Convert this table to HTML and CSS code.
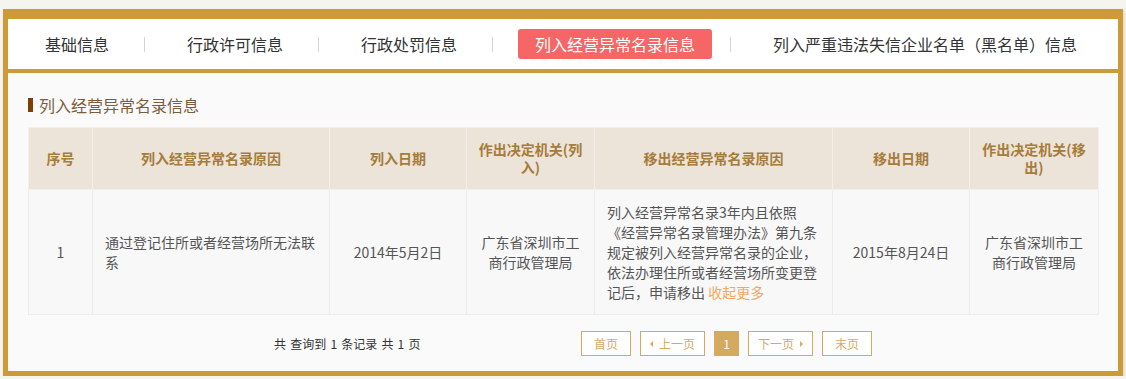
FILE: index.html
```html
<!DOCTYPE html>
<html lang="zh-CN">
<head>
<meta charset="utf-8">
<title>列入经营异常名录信息</title>
<link rel="stylesheet" href="styles.css">
</head>
<body>
<div class="panel">
  <nav class="tabs">
    <a class="tab">基础信息</a>
    <span class="sep"></span>
    <a class="tab">行政许可信息</a>
    <span class="sep"></span>
    <a class="tab">行政处罚信息</a>
    <span class="sep"></span>
    <a class="tab active">列入经营异常名录信息</a>
    <span class="sep"></span>
    <a class="tab">列入严重违法失信企业名单（黑名单）信息</a>
  </nav>
  <section class="content">
    <h2 class="title">列入经营异常名录信息</h2>
    <table class="grid">
      <colgroup>
        <col class="c1"><col class="c2"><col class="c3"><col class="c4"><col class="c5"><col class="c6"><col class="c7">
      </colgroup>
      <thead>
        <tr>
          <th>序号</th>
          <th>列入经营异常名录原因</th>
          <th>列入日期</th>
          <th>作出决定机关(列入)</th>
          <th>移出经营异常名录原因</th>
          <th>移出日期</th>
          <th>作出决定机关(移出)</th>
        </tr>
      </thead>
      <tbody>
        <tr>
          <td>1</td>
          <td class="left">通过登记住所或者经营场所无法联系</td>
          <td>2014年5月2日</td>
          <td>广东省深圳市工商行政管理局</td>
          <td class="left"><span class="reason">列入经营异常名录3年内且依照《经营异常名录管理办法》第九条规定被列入经营异常名录的企业，依法办理住所或者经营场所变更登</span><span class="reason-tail">记后，申请移出 <a class="more">收起更多</a></span></td>
          <td>2015年8月24日</td>
          <td>广东省深圳市工商行政管理局</td>
        </tr>
      </tbody>
    </table>
    <div class="pager">
      <div class="pager-info">共 查询到 1 条记录 共 1 页</div>
      <div class="pager-btns">
        <a class="pbtn w50">首页</a>
        <a class="pbtn w65"><span class="tri-left"></span>上一页</a>
        <a class="pbtn current">1</a>
        <a class="pbtn w65">下一页<span class="tri-right"></span></a>
        <a class="pbtn w50">末页</a>
      </div>
    </div>
  </section>
</div>
</body>
</html>
```

FILE: styles.css
```css
* { box-sizing: border-box; }
html, body { margin: 0; padding: 0; }
body {
  background: #f6f4ee;
  padding: 9px 3px 0 3px;
  font-family: "Noto Sans CJK SC", "Noto Sans", sans-serif;
  color: #333;
}
.panel {
  width: 1120px;
  background: #cc9b37;
  padding: 10px 5px 5px 5px;
  box-shadow: 1px 2px 3px rgba(0,0,0,0.15);
}
.tabs {
  height: 50px;
  background: #fff;
  margin-bottom: 4px;
  display: flex;
  align-items: center;
  padding-left: 20px;
}
.tab {
  display: block;
  height: 30px;
  line-height: 30px;
  padding: 0 17px;
  font-size: 16px;
  color: #333;
  border-radius: 3px;
  white-space: nowrap;
}
.tab.active {
  background: #f76666;
  color: #fff;
}
.sep {
  width: 1px;
  height: 15px;
  background: #d4d4d4;
  margin: 0 25px 0 18px;
}
.content {
  background: #fafafa;
  padding: 20px 20px 15px 20px;
}
.title {
  margin: 0 0 10px 0;
  height: 24px;
  line-height: 24px;
  font-size: 16px;
  font-weight: normal;
  color: #7d5c3c;
  display: flex;
  align-items: center;
}
.title::before {
  content: "";
  width: 5px;
  height: 14px;
  background: #7f3f00;
  margin-right: 6px;
}
.grid {
  width: 1070px;
  table-layout: fixed;
  border-collapse: collapse;
  font-size: 14px;
}
.c1 { width: 64px; }
.c2 { width: 237px; }
.c3 { width: 137px; }
.c4 { width: 128px; }
.c5 { width: 238px; }
.c6 { width: 137px; }
.c7 { width: 129px; }
.grid th {
  background: #ece3d9;
  color: #a67c3a;
  font-weight: bold;
  line-height: 18px;
  padding: 12px 10px 13px;
  border: 1px solid #f4efe9;
  text-align: center;
  vertical-align: middle;
}
.grid td {
  background: #f8f8f8;
  color: #555;
  line-height: 20px;
  padding: 12px 12px;
  border: 1px solid #ececec;
  text-align: center;
  vertical-align: middle;
}
.grid td.left { text-align: left; }
.reason, .reason-tail { display: block; }
.more {
  color: #f6a75e;
}
.pager {
  margin-top: 16px;
  height: 25px;
  display: flex;
  align-items: center;
  padding-left: 246px;
  font-size: 12px;
}
.pager-info {
  width: 307px;
  color: #333;
  word-spacing: 1.5px;
}
.pager-btns {
  display: flex;
  gap: 9px;
}
.pbtn {
  height: 25px;
  border: 1px solid #d4aa5f;
  color: #d4aa5f;
  display: flex;
  align-items: center;
  justify-content: center;
  gap: 6px;
  background: #fff;
}
.w50 { width: 50px; }
.w65 { width: 65px; }
.pbtn.current {
  width: 25px;
  background: #d4aa5f;
  color: #fff;
}
.tri-left, .tri-right {
  width: 0;
  height: 0;
  border-top: 3px solid transparent;
  border-bottom: 3px solid transparent;
}
.tri-left { border-right: 3px solid #d4aa5f; }
.tri-right { border-left: 3px solid #d4aa5f; }
```
